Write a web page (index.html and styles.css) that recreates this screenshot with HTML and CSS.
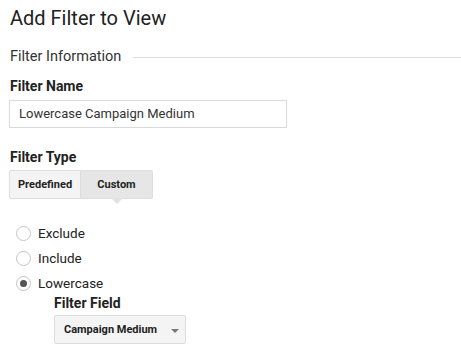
FILE: index.html
```html
<!DOCTYPE html>
<html>
<head>
<meta charset="utf-8">
<link rel="stylesheet" href="styles.css">
</head>
<body>
<div class="page">
  <h1 class="title">Add Filter to View</h1>
  <div class="section-head">
    <span>Filter Information</span>
    <span class="rule"></span>
  </div>
  <div class="label">Filter Name</div>
  <div class="input">Lowercase Campaign Medium</div>
  <div class="label label-type">Filter Type</div>
  <div class="toggle">
    <div class="tbtn">Predefined</div>
    <div class="tbtn active">Custom</div>
  </div>
  <div class="radios">
    <div class="radio"><span class="circle"></span><span>Exclude</span></div>
    <div class="radio"><span class="circle"></span><span>Include</span></div>
    <div class="radio"><span class="circle checked"></span><span>Lowercase</span></div>
  </div>
  <div class="sub">
    <div class="label">Filter Field</div>
    <div class="select"><span>Campaign Medium</span><span class="caret"></span></div>
  </div>
</div>
</body>
</html>
```
FILE: styles.css
```css
html, body {
  margin: 0;
  padding: 0;
  background: #fff;
}
body {
  font-family: Roboto, "Liberation Sans", sans-serif;
  color: #222;
}
.page {
  padding: 6px 0 0 10px;
}
.title {
  margin: 0;
  font-size: 20px;
  font-weight: 400;
  line-height: 24px;
  color: #222;
}
.section-head {
  display: flex;
  align-items: center;
  margin-top: 18px;
  font-size: 14.5px;
  line-height: 18px;
  color: #333;
}
.rule {
  flex: 1;
  height: 1px;
  background: #ddd;
  margin-left: 12px;
}
.label {
  font-size: 14px;
  font-weight: 700;
  line-height: 16px;
  color: #222;
  margin-top: 12px;
}
.input {
  box-sizing: border-box;
  width: 278px;
  height: 28px;
  margin: 6px 0 0 -1px;
  border: 1px solid #d9d9d9;
  padding: 0 0 0 9px;
  font-size: 13px;
  line-height: 26px;
  color: #333;
}
.label-type {
  margin-top: 21px;
}
.toggle {
  display: flex;
  margin: 5px 0 0 -1px;
  width: max-content;
}
.tbtn {
  box-sizing: border-box;
  height: 29px;
  padding: 0 8px;
  font-size: 11px;
  font-weight: 700;
  line-height: 27px;
  color: #222;
  background: #f4f4f4;
  border: 1px solid #ddd;
}
.tbtn + .tbtn {
  border-left: none;
}
.tbtn:first-child {
  width: 72px;
  border-radius: 2px 0 0 2px;
}
.tbtn.active {
  position: relative;
  width: 72px;
  text-align: center;
  background: #e6e6e6;
  border-radius: 0 2px 2px 0;
}
.tbtn.active::after {
  content: "";
  position: absolute;
  left: 50%;
  bottom: -6px;
  margin-left: -6px;
  border-left: 6px solid transparent;
  border-right: 6px solid transparent;
  border-top: 6px solid #e2e2e2;
}
.radios {
  margin-top: 25px;
  display: flex;
  flex-direction: column;
  gap: 7px;
}
.radio {
  display: flex;
  align-items: center;
  height: 18px;
  font-size: 13.5px;
  color: #222;
}
.circle {
  box-sizing: border-box;
  width: 15px;
  height: 15px;
  border: 1px solid #c4c4c4;
  border-radius: 50%;
  margin: 0 7px 0 6px;
  display: flex;
  align-items: center;
  justify-content: center;
}
.circle.checked::after {
  content: "";
  width: 7px;
  height: 7px;
  border-radius: 50%;
  background: #555;
}
.sub {
  padding-left: 44px;
}
.sub .label {
  margin-top: 3px;
}
.select {
  box-sizing: border-box;
  display: flex;
  align-items: center;
  width: 132px;
  height: 29px;
  margin-top: 4px;
  padding: 0 6px 0 9px;
  border: 1px solid #ddd;
  border-radius: 2px;
  background: #f4f4f4;
  font-size: 11px;
  font-weight: 700;
  color: #222;
}
.select span:first-child {
  flex: 1;
}
.caret {
  width: 0;
  height: 0;
  margin-top: 2px;
  border-left: 4px solid transparent;
  border-right: 4px solid transparent;
  border-top: 4px solid #777;
}
```
